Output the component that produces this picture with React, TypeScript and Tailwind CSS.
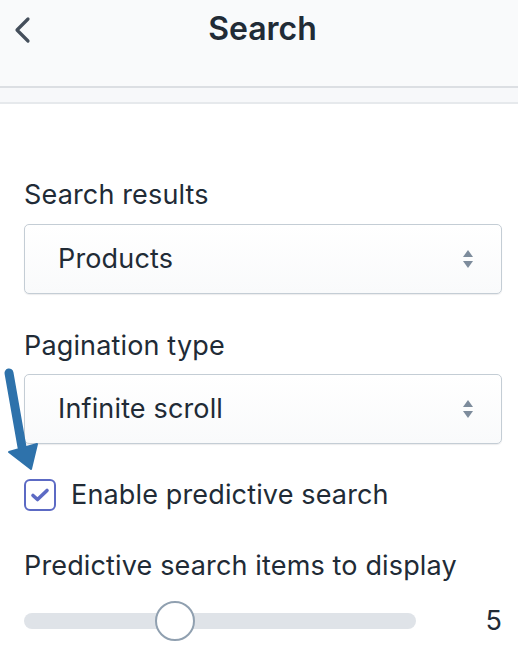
import React from "react";

const FONT = { fontFamily: "Inter, 'Noto Sans', sans-serif" };

function SelectArrows() {
  return (
    <svg width="12" height="20" viewBox="0 0 12 20" className="shrink-0">
      <path d="M6 1 L11 8 L1 8 Z" fill="#7d8c9c" />
      <path d="M1 12 L11 12 L6 19 Z" fill="#7d8c9c" />
    </svg>
  );
}

function SelectBox({ value }: { value: string }) {
  return (
    <div className="flex h-[70px] items-center justify-between rounded-[5px] border-[1.5px] border-[#c4cdd5] bg-gradient-to-b from-white to-[#f9fafb] pl-[33px] pr-[27px] shadow-[0_1px_1px_rgba(22,29,37,0.08)]">
      <span className="text-[27px] tracking-[0.15px] text-[#212b36]">{value}</span>
      <SelectArrows />
    </div>
  );
}

function Label({ children }: { children: React.ReactNode }) {
  return <div className="text-[27px] leading-[32px] tracking-[0.15px] text-[#212b36]">{children}</div>;
}

export default function App() {
  return (
    <div className="relative min-h-[651px] w-[518px] overflow-hidden bg-white" style={FONT}>
      {/* top bar */}
      <header className="relative h-[86px] bg-[#f9fafb]">
        <div className="flex h-[57px] items-center justify-center pl-[7px]">
          <h1 className="text-[32px] font-semibold text-[#212b36]">Search</h1>
        </div>
        <button type="button" className="absolute left-[13px] top-[16px] p-0">
          <svg width="20" height="28" viewBox="0 0 20 28" fill="none" stroke="#454f5b" strokeWidth="3.2" strokeLinecap="round" strokeLinejoin="round">
            <path d="M15 3 L4 14 L15 25" />
          </svg>
        </button>
      </header>
      <div className="h-[2px] bg-[#dcdfe3]" />
      <div className="h-[16px] border-b-2 border-[#e6e9ec] bg-[#f7f8fa]" />

      <main className="flex flex-col px-[24px] pt-[75px] pr-[16px]">
        <Label>Search results</Label>
        <div className="mt-[13px]">
          <SelectBox value="Products" />
        </div>

        <div className="mt-[36px]">
          <Label>Pagination type</Label>
        </div>
        <div className="mt-[12px]">
          <SelectBox value="Infinite scroll" />
        </div>

        <label className="mt-[35px] flex items-center gap-[15px]">
          <span className="flex h-[32px] w-[32px] items-center justify-center rounded-[6px] border-2 border-[#5c6ac4] bg-white">
            <svg width="20" height="16" viewBox="0 0 20 16" fill="none" stroke="#5c6ac4" strokeWidth="3.6" strokeLinecap="round" strokeLinejoin="round">
              <path d="M3 8.5 L7.5 12.5 L17 3.5" />
            </svg>
          </span>
          <span className="text-[27px] leading-[32px] tracking-[0.15px] text-[#212b36]">Enable predictive search</span>
        </label>

        <div className="mt-[39px]">
          <Label>Predictive search items to display</Label>
        </div>

        <div className="mt-[19px] flex h-[40px] items-center">
          <div className="relative h-[16px] w-[392px] rounded-full bg-[#dfe3e8]">
            <div className="absolute left-[131px] top-[-12px] h-[40px] w-[40px] rounded-full border-2 border-[#90a0b0] bg-white" />
          </div>
          <span className="ml-auto text-[27px] text-[#212b36]">5</span>
        </div>
      </main>

      {/* annotation arrow */}
      <svg className="pointer-events-none absolute left-0 top-[365px]" width="50" height="110" viewBox="0 0 50 110">
        <path d="M9 8 L22 82" stroke="#2e72ab" strokeWidth="9" strokeLinecap="round" />
        <path d="M9 87 L37 79 L31 104 Z" fill="#2e72ab" stroke="#2e72ab" strokeWidth="2" strokeLinejoin="round" />
      </svg>
    </div>
  );
}
